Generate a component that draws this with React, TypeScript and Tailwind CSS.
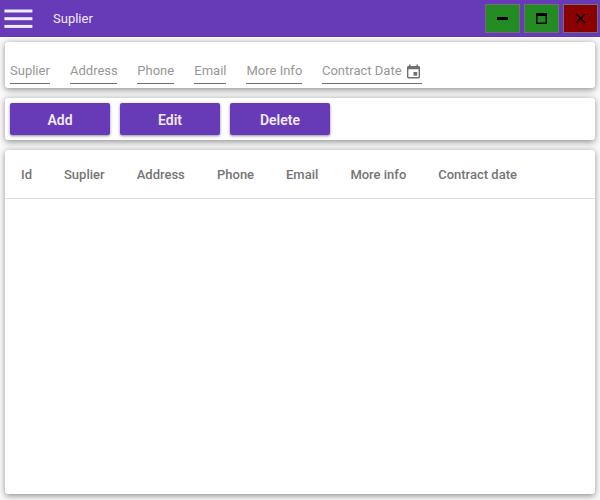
import React from "react";

const card =
  "rounded-[3px] bg-white shadow-[0_1.5px_6px_rgba(0,0,0,0.42)]";

const fields = [
  { label: "Suplier", width: "w-[40px]" },
  { label: "Address", width: "w-[47.3px]" },
  { label: "Phone", width: "w-[37px]" },
  { label: "Email", width: "w-[32.2px]" },
  { label: "More Info", width: "w-[55.5px]" },
];

const columns = [
  { label: "Id", width: "w-[43px]" },
  { label: "Suplier", width: "w-[72.7px]" },
  { label: "Address", width: "w-[80.3px]" },
  { label: "Phone", width: "w-[69px]" },
  { label: "Email", width: "w-[64.4px]" },
  { label: "More info", width: "w-[87.8px]" },
  { label: "Contract date", width: "w-[96px]" },
];

function WindowButton({ color, label, children }: { color: string; label: string; children: React.ReactNode }) {
  return (
    <button aria-label={label} className={`h-[29px] w-[35px] border border-[#707070] ${color}`}>
      <svg width="33" height="27" viewBox="0 0 33 27" shapeRendering="crispEdges">
        {children}
      </svg>
    </button>
  );
}

export default function App() {
  return (
    <div className="flex h-[500px] w-[600px] flex-col overflow-hidden bg-[#fafafa] font-[Roboto,sans-serif] text-[13px] leading-4">
      <header className="flex h-[37px] shrink-0 items-center bg-[#673ab7] pr-[2px] pl-[4px]">
        <svg width="29" height="20" viewBox="0 0 29 20" fill="#f0ebf8">
          <rect x="0.4" y="0.5" width="28" height="3" />
          <rect x="0.4" y="8.2" width="28" height="3" />
          <rect x="0.4" y="15.9" width="28" height="3" />
        </svg>
        <span className="ml-5 text-[#f0ebf8]">Suplier</span>
        <div className="ml-auto flex gap-1">
          <WindowButton label="Minimize" color="bg-[#228b22]">
            <rect x="11" y="12" width="11" height="3" fill="#000" />
          </WindowButton>
          <WindowButton label="Maximize" color="bg-[#228b22]">
            <path d="M11 8h11v11H11zM12.500 11v6.500h8V11z" fill="#000" fillRule="evenodd" shapeRendering="auto" />
          </WindowButton>
          <WindowButton label="Close" color="bg-[#8b0000]">
            <path d="M12 9l9 9M21 9l-9 9" stroke="#000" strokeWidth="1.4" shapeRendering="auto" />
          </WindowButton>
        </div>
      </header>

      <main className="flex min-h-0 flex-1 flex-col gap-[10px] px-[5px] pt-[5px] pb-[6px]">
        <section className={`flex h-[46px] shrink-0 items-end gap-5 px-[5px] pb-[4px] text-[#979797] ${card}`}>
          {fields.map((f) => (
            <div key={f.label} className={`h-[21px] border-b border-[#707070] whitespace-nowrap ${f.width}`}>
              {f.label}
            </div>
          ))}
          <div className="flex h-[21px] w-[100px] justify-between border-b border-[#707070] whitespace-nowrap">
            <span>Contract Date</span>
            <svg className="mt-px mr-[2px]" width="13" height="15" viewBox="0 0 13 15" fill="#707070">
              <path
                fillRule="evenodd"
                d="M2 0.500h1.500V2h6V0.500H11V2h.600A1.400 1.400 0 0 1 13 3.400v9.700a1.400 1.400 0 0 1-1.400 1.400H1.400A1.400 1.400 0 0 1 0 13.100V3.400A1.400 1.400 0 0 1 1.400 2H2zM1.400 5.300v7.800h10.200V5.300z"
              />
              <rect x="6.500" y="8" width="3.700" height="3.700" />
            </svg>
          </div>
        </section>

        <section className={`flex h-[42px] shrink-0 gap-[10px] p-[5px] ${card}`}>
          {["Add", "Edit", "Delete"].map((label) => (
            <button
              key={label}
              className="h-8 w-[100px] rounded-[2px] bg-[#673ab7] pt-[2px] text-[14px] font-semibold text-[#f0ebf8] shadow-[0_1px_3px_rgba(0,0,0,0.45)]"
            >
              {label}
            </button>
          ))}
        </section>

        <section className={`min-h-0 flex-1 ${card}`}>
          <div className="flex h-[49px] items-center border-b border-[#dedede] pt-px pl-4 font-medium text-[#757575]">
            {columns.map((c) => (
              <span key={c.label} className={`whitespace-nowrap ${c.width}`}>
                {c.label}
              </span>
            ))}
          </div>
        </section>
      </main>
    </div>
  );
}
